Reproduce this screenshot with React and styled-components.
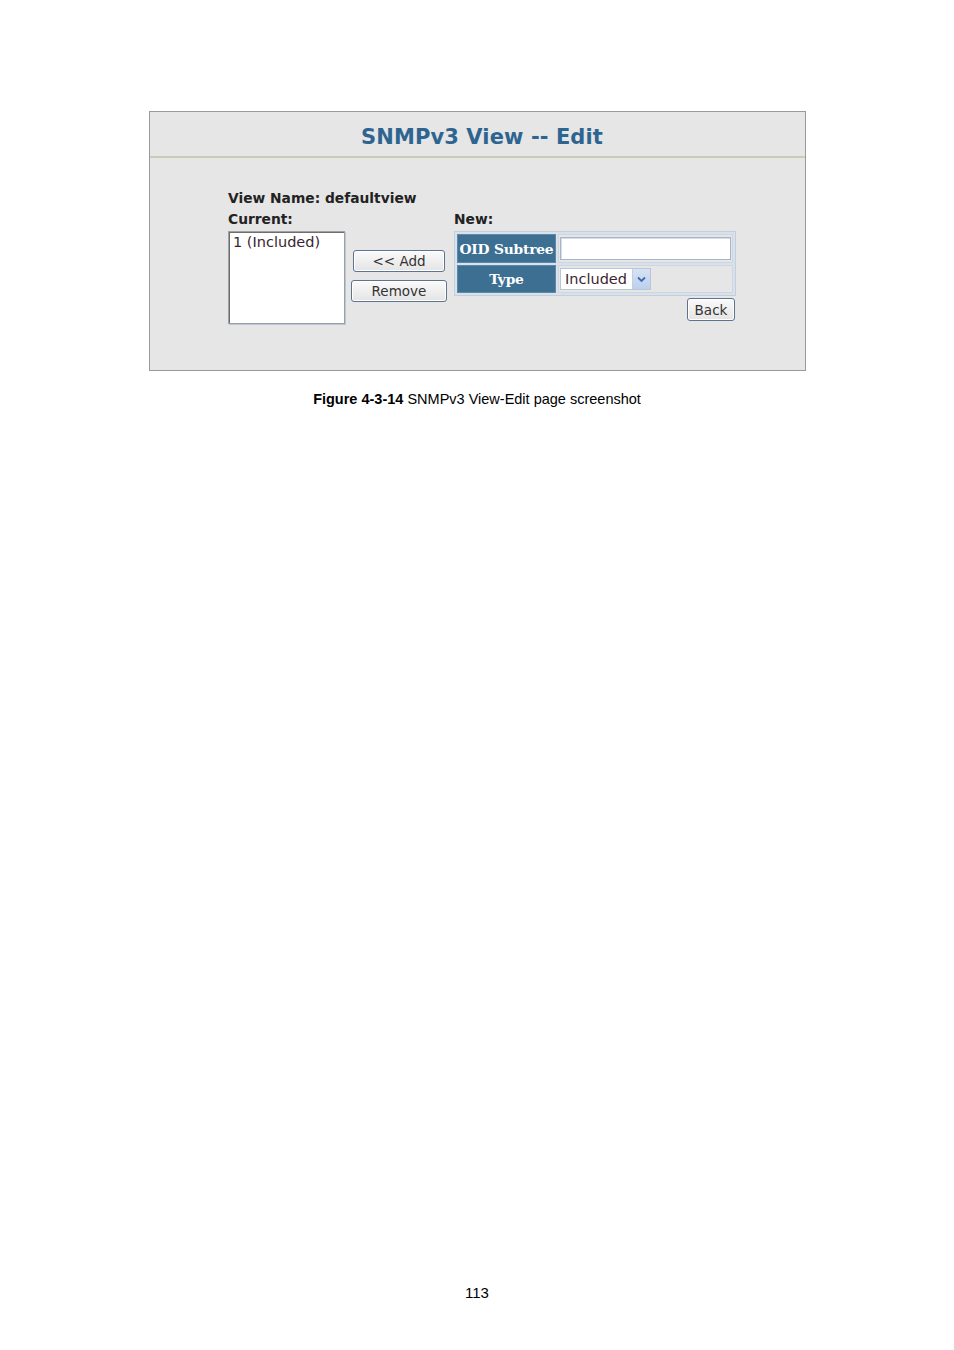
import React from "react";
import styled, { createGlobalStyle } from "styled-components";

const Global = createGlobalStyle`
  html, body { margin: 0; padding: 0; background: #fff; }
  body { font-family: "DejaVu Sans", Verdana, sans-serif; }
`;

const Page = styled.div`
  width: 954px;
  min-height: 1350px;
  display: flex;
  flex-direction: column;
  align-items: center;
  padding-top: 111px;
  box-sizing: border-box;
`;

const Panel = styled.div`
  width: 657px;
  height: 260px;
  box-sizing: border-box;
  border: 1px solid #9a9a9a;
  background: #e6e6e6;
  margin-left: 1px;
`;

const Header = styled.div`
  height: 44px;
  border-bottom: 2px solid #cbcbb6;
  display: flex;
  align-items: center;
  justify-content: center;
`;

const Title = styled.h1`
  margin: 0;
  font-family: "DejaVu Sans", Verdana, sans-serif;
  font-weight: bold;
  font-size: 21px;
  color: #2e6590;
  letter-spacing: 0.1px;
  padding-top: 6px;
  padding-left: 9px;
`;

const Body = styled.div`
  padding: 30px 0 0 78px;
`;

const Label = styled.div`
  font-weight: bold;
  font-size: 13.8px;
  line-height: 20px;
  color: #222;
`;

const Grid = styled.div`
  display: grid;
  grid-template-columns: 117px 96px 283px;
  column-gap: 6px;
  margin-top: 1px;
`;

const Col = styled.div`
  display: flex;
  flex-direction: column;
`;

const ListBox = styled.div`
  margin-top: 2px;
  height: 93px;
  box-sizing: border-box;
  background: #fff;
  border: 1px solid #a0a0a0;
  box-shadow: inset 1px 1px 0 #6e6e6e, 1px 1px 0 #b7c6da;
  padding: 2px 4px;
  font-size: 14.5px;
  color: #3c1f33;
  line-height: 16px;
  white-space: nowrap;
`;

const Buttons = styled.div`
  display: flex;
  flex-direction: column;
  align-items: center;
  gap: 8px;
  padding-top: 41px;
`;

const Button = styled.button`
  width: ${(p) => p.$w}px;
  height: ${(p) => p.$h || 22}px;
  box-sizing: border-box;
  border: 1px solid #5b7590;
  border-radius: 3px;
  background: linear-gradient(#fafafa, #e4e4e4);
  font-family: "DejaVu Sans", Verdana, sans-serif;
  font-size: 13.5px;
  color: #333;
  padding: 0;
  box-shadow: inset 0 0 0 1px #fff;
`;

const RightCol = styled.div`
  display: flex;
  flex-direction: column;
  padding-left: 1px;
`;

const Table = styled.table`
  margin-top: 2px;
  width: 282px;
  border-collapse: separate;
  border-spacing: 2px;
  background: #d9e1ea;
  border: 1px solid #c3cfdd;
`;

const Th = styled.th`
  width: 98px;
  height: ${(p) => p.$h}px;
  padding: 0;
  background: #3d6f93;
  border: 1px solid #5e88a8;
  color: #fff;
  font-family: "DejaVu Serif", Georgia, serif;
  font-weight: bold;
  font-size: 13.8px;
  text-align: center;
  white-space: nowrap;
  letter-spacing: -0.2px;
`;

const Td = styled.td`
  padding: 1px 1px;
  background: #e6e6e6;
  border: 1px solid #cdd6e2;
`;

const Input = styled.div`
  width: 171px;
  height: 23px;
  box-sizing: border-box;
  background: #fff;
  border: 1px solid #a6b6ca;
  box-shadow: inset 1px 1px 0 #d6dde6;
`;

const Select = styled.div`
  width: 91px;
  height: 22px;
  box-sizing: border-box;
  background: #fff;
  border: 1px solid #b9c6d6;
  display: flex;
  align-items: center;
  justify-content: space-between;
  padding-left: 4px;
  font-size: 14.5px;
  color: #3c1f33;
`;

const Arrow = styled.span`
  width: 17px;
  height: 20px;
  background: linear-gradient(#d7e3f5, #bccfee);
  border-left: 1px solid #c2d0e4;
  display: flex;
  align-items: center;
  justify-content: center;
`;

const BackRow = styled.div`
  display: flex;
  justify-content: flex-end;
  padding-right: 1px;
  margin-top: 2px;
`;

const Caption = styled.p`
  margin: 20px 0 0 0;
  font-family: "Liberation Sans", Arial, sans-serif;
  font-size: 14.5px;
  color: #000;
`;

const PageNum = styled.div`
  margin-top: auto;
  margin-bottom: 49px;
  font-family: "Liberation Sans", Arial, sans-serif;
  font-size: 15px;
  color: #000;
`;

export default function App() {
  return (
    <>
      <Global />
      <Page>
        <Panel>
          <Header>
            <Title>SNMPv3 View -- Edit</Title>
          </Header>
          <Body>
            <Label>View Name: defaultview</Label>
            <Grid>
              <Col>
                <Label>Current:</Label>
                <ListBox>1 (Included)</ListBox>
              </Col>
              <Buttons>
                <Button $w={92}>&lt;&lt; Add</Button>
                <Button $w={96}>Remove</Button>
              </Buttons>
              <RightCol>
                <Label>New:</Label>
                <Table>
                  <tbody>
                    <tr>
                      <Th $h={27}>OID Subtree</Th>
                      <Td>
                        <Input />
                      </Td>
                    </tr>
                    <tr>
                      <Th $h={26}>Type</Th>
                      <Td>
                        <Select>
                          Included
                          <Arrow>
                            <svg width="9" height="7" viewBox="0 0 9 7">
                              <path d="M1 1.5 L4.5 5 L8 1.5" fill="none" stroke="#3d6ab0" strokeWidth="1.8" />
                            </svg>
                          </Arrow>
                        </Select>
                      </Td>
                    </tr>
                  </tbody>
                </Table>
                <BackRow>
                  <Button $w={48} $h={23}>Back</Button>
                </BackRow>
              </RightCol>
            </Grid>
          </Body>
        </Panel>
        <Caption>
          <b>Figure 4-3-14</b> SNMPv3 View-Edit page screenshot
        </Caption>
        <PageNum>113</PageNum>
      </Page>
    </>
  );
}
